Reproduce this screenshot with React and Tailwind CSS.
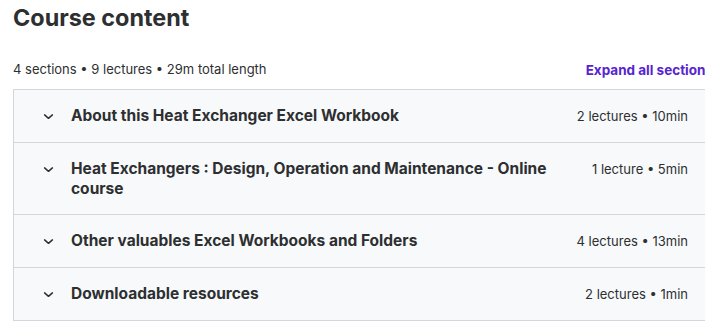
const sections = [
  { title: 'About this Heat Exchanger Excel Workbook', meta: '2 lectures • 10min' },
  { title: 'Heat Exchangers : Design, Operation and Maintenance - Online course', meta: '1 lecture • 5min' },
  { title: 'Other valuables Excel Workbooks and Folders', meta: '4 lectures • 13min' },
  { title: 'Downloadable resources', meta: '2 lectures • 1min' },
];

function Chevron() {
  return (
    <svg width="11" height="11" viewBox="0 0 24 24" fill="none" stroke="#2d2f31" strokeWidth="3.2" strokeLinecap="round" strokeLinejoin="round">
      <polyline points="3.5 8.5 12 16 20.5 8.5" />
    </svg>
  );
}

export default function App() {
  return (
    <div className="w-[705px] h-[321px] overflow-hidden bg-white text-[#2d2f31] font-['Inter',sans-serif]">
      <div className="w-[700px] ml-[13px] pt-[4px]">
        <h2 className="text-[23.4px] leading-[1.2] font-bold">Course content</h2>
        <div className="flex items-center justify-between mt-[28px] mb-[9px] h-[20px]">
          <span className="text-[13px]">4 sections • 9 lectures • 29m total length</span>
          <button className="text-[13.5px] font-bold text-[#5624d0]">Expand all sections</button>
        </div>
        <div className="border border-[#d1d7dc] border-b-0">
          {sections.map((s, i) => (
            <div key={i} className="flex items-start bg-[#f7f9fa] pl-[29px] pr-[24px] py-[16px] border-b border-[#d1d7dc]">
              <div className="w-[11px] h-[20px] flex items-center mr-[17px]">
                <Chevron />
              </div>
              <div className="flex-1 text-[15.5px] leading-[19.5px] font-bold pr-[16px]">{s.title}</div>
              <div className="text-[13px] leading-[20px] whitespace-nowrap">{s.meta}</div>
            </div>
          ))}
        </div>
      </div>
    </div>
  );
}
